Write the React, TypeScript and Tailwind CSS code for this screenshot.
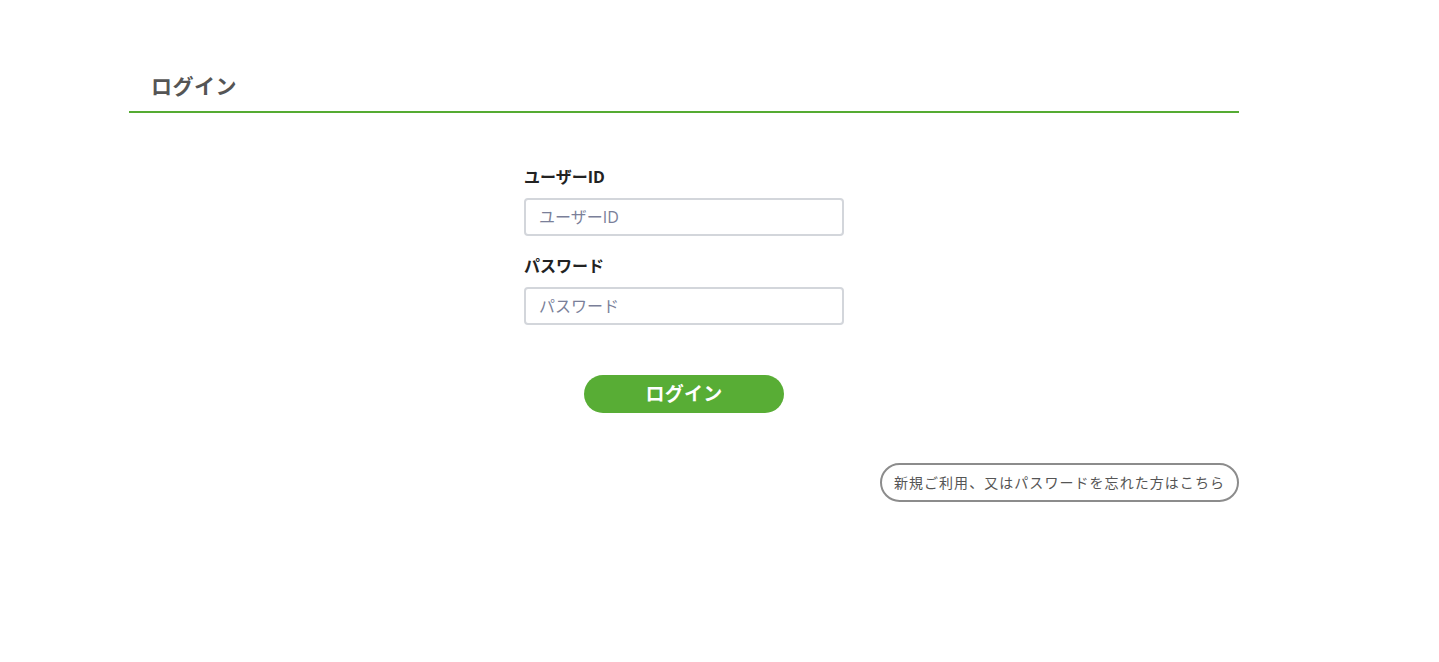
import { useState } from "react";

export default function App() {
  const [userId, setUserId] = useState("");
  const [password, setPassword] = useState("");

  return (
    <div className="min-h-[662px] bg-white font-['Open_Sans','Noto_Sans_CJK_JP',sans-serif]">
      <div className="ml-[129px] w-[1110px] pt-[72px]">
        {/* Heading */}
        <div className="border-b-2 border-[#55ab33] px-[22px] pb-[11px]">
          <h1 className="text-[21px] font-bold leading-[28px] tracking-[0.5px] text-[#555555]">ログイン</h1>
        </div>

        {/* Form */}
        <form onSubmit={(e) => e.preventDefault()} className="mx-auto mt-[53px] w-[320px]">
          <label className="block text-[16px] font-bold leading-[22px] text-[#222222]">ユーザーID</label>
          <input
            value={userId}
            onChange={(e) => setUserId(e.target.value)}
            placeholder="ユーザーID"
            className="mt-[10px] h-[38px] w-full rounded-[4px] border-2 border-[#d3d6db] px-[13px] text-[16px] text-[#333] placeholder:text-[#7a7f99] focus:outline-none"
          />
          <label className="mt-[19px] block text-[16px] font-bold leading-[22px] text-[#222222]">パスワード</label>
          <input
            type="password"
            value={password}
            onChange={(e) => setPassword(e.target.value)}
            placeholder="パスワード"
            className="mt-[10px] h-[38px] w-full rounded-[4px] border-2 border-[#d3d6db] px-[13px] text-[16px] text-[#333] placeholder:text-[#7a7f99] focus:outline-none"
          />
          <div className="mt-[50px] flex justify-center">
            <button
              type="submit"
              className="h-[38px] w-[200px] rounded-full bg-[#58ad35] text-[19px] font-bold tracking-[0.3px] text-white"
            >
              ログイン
            </button>
          </div>
        </form>

        <div className="mt-[50px] flex justify-end">
          <a
            href="#"
            className="flex h-[39px] items-center rounded-full border-2 border-[#8c8c8c] px-[12px] text-[14px] tracking-[1.05px] text-[#555555]"
          >
            新規ご利用、又はパスワードを忘れた方はこちら
          </a>
        </div>
      </div>
    </div>
  );
}
